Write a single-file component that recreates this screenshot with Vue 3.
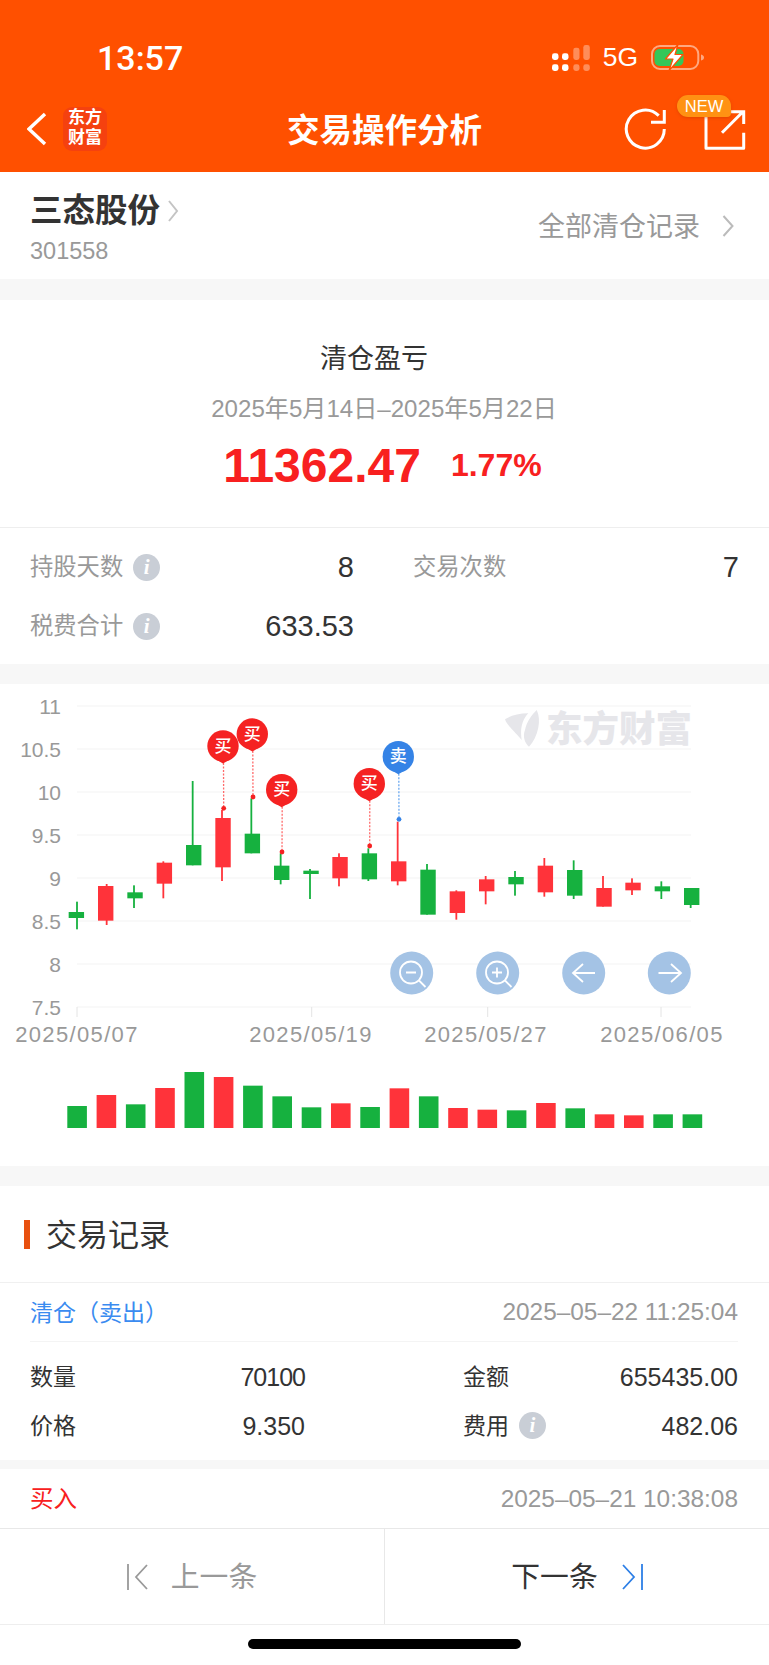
<template>
  <div class="page">
    <header class="top">
      <div class="status">
        <span class="time">13:57</span>
        <div class="status-right">
          <svg width="38" height="26" viewBox="0 0 38 26">
            <rect x="0" y="8.3" width="6.5" height="6.7" rx="2.4" fill="#fff" />
            <rect x="10" y="8.3" width="6.5" height="6.7" rx="2.4" fill="#fff" />
            <rect x="0" y="19.3" width="6.5" height="6.7" rx="2.4" fill="#fff" />
            <rect x="10" y="19.3" width="6.5" height="6.7" rx="2.4" fill="#fff" />
            <rect x="21.3" y="2.7" width="6.2" height="12.3" rx="2.4" fill="#fff" opacity=".35" />
            <rect x="31.3" y="0" width="6.5" height="15" rx="2.4" fill="#fff" opacity=".35" />
            <rect x="21.3" y="19.3" width="6.2" height="6.7" rx="2.4" fill="#fff" opacity=".35" />
            <rect x="31.3" y="19.3" width="6.5" height="6.7" rx="2.4" fill="#fff" opacity=".35" />
          </svg>
          <span class="net">5G</span>
          <svg width="53" height="27" viewBox="0 0 53 27">
            <rect x="1" y="2" width="46.3" height="23" rx="8" fill="none" stroke="#fff" stroke-opacity=".5" stroke-width="2" />
            <rect x="3.5" y="5" width="29" height="17" rx="5" fill="#34c759" />
            <path d="M50 10.5c2 .5 3 1.5 3 3s-1 2.500-3 3z" fill="#fff" fill-opacity=".5" />
            <path d="M27 .5 14.500 15H22l-4 11.700L32 10.500h-8z" fill="#fff" stroke="#ff5000" stroke-width="1.200" stroke-linejoin="round" />
          </svg>
        </div>
      </div>
      <div class="nav">
        <div class="nav-left">
          <svg width="20" height="34" viewBox="0 0 20 34">
            <path d="M18 2 2 17l16 15" fill="none" stroke="#fff" stroke-width="3.400" />
          </svg>
          <div class="logo">东方<br />财富</div>
        </div>
        <div class="nav-title">交易操作分析</div>
        <div class="nav-right">
          <svg width="44" height="44" viewBox="0 0 44 44">
            <path d="M41.300 22A19 19 0 1 1 35.700 8.600" fill="none" stroke="#fff" stroke-width="3" />
            <path d="M28 15.300h13.300V3" fill="none" stroke="#fff" stroke-width="3" />
          </svg>
          <div class="share">
            <svg width="42" height="41" viewBox="0 0 42 41">
              <path d="M2 8v31.300h37.700V23.700" fill="none" stroke="#fff" stroke-width="3" stroke-linejoin="round" />
              <path d="M18 23.700 38.700 3M27 2.700h12.700V15" fill="none" stroke="#fff" stroke-width="3" />
            </svg>
            <span class="new">NEW</span>
          </div>
        </div>
      </div>
    </header>

    <section class="stock">
      <div>
        <div class="stock-name">
          三态股份
          <svg width="11" height="22" viewBox="0 0 11 22">
            <path d="M1 1l8 10-8 10" fill="none" stroke="#c4c4c4" stroke-width="2" />
          </svg>
        </div>
        <div class="stock-code">301558</div>
      </div>
      <div class="all-link">
        <span class="cjk">全部清仓记录</span>
        <svg width="12" height="22" viewBox="0 0 12 22">
          <path d="M1.500 1l9 10-9 10" fill="none" stroke="#bbb" stroke-width="2" />
        </svg>
      </div>
    </section>

    <section class="summary">
      <div class="summary-head">
        <div class="summary-title">清仓盈亏</div>
        <div class="summary-date">2025年5月14日–2025年5月22日</div>
        <div class="summary-amount">
          <span class="profit">11362.47</span>
          <span class="percent">1.77%</span>
        </div>
      </div>
      <div class="stats">
        <div class="stat">
          <span class="stat-label"><span class="cjk">持股天数</span><i class="info">i</i></span>
          <span class="stat-value">8</span>
        </div>
        <div class="stat">
          <span class="stat-label"><span class="cjk">交易次数</span></span>
          <span class="stat-value">7</span>
        </div>
        <div class="stat">
          <span class="stat-label"><span class="cjk">税费合计</span><i class="info">i</i></span>
          <span class="stat-value">633.53</span>
        </div>
      </div>
    </section>

    <section class="chart">
      <svg width="769" height="482" viewBox="0 684 769 482">
        <!-- 水印 -->
        <path d="M536.700 710C541.700 720 538.300 736.700 529 746.700 525 743.300 522.300 736.700 525 730 526.700 721.700 531.700 715 536.700 710Z" fill="#e6e6ea" />
        <path d="M528.300 713.300C518.300 713.300 510 716 505 719.300 506.700 725 513.300 730 521.700 740 520 730 521.700 720 528.300 713.300Z" fill="#e6e6ea" />
        <text x="692" y="742" text-anchor="end" class="watermark">东方财富</text>

        <line v-for="g in grid" :key="g.label" x1="77" x2="691" :y1="g.y" :y2="g.y" stroke="#f3f3f3" stroke-width="1.200" />
        <text v-for="g in grid" :key="'l' + g.label" x="61" :y="g.y + 7.500" text-anchor="end" class="axis">{{ g.label }}</text>

        <g v-for="t in ticks" :key="t.label">
          <line :x1="t.x" :x2="t.x" y1="1007" y2="1017" stroke="#e4e4e4" stroke-width="1" />
          <text :x="t.tx" y="1042" text-anchor="middle" class="axis date">{{ t.label }}</text>
        </g>

        <g v-for="(c, i) in candles" :key="i" :fill="c.color">
          <rect :x="c.wick - 0.9" :y="c.top" width="1.800" :height="c.bottom - c.top" />
          <rect :x="c.x" :y="c.bodyTop" width="15.400" :height="c.bodyBottom - c.bodyTop" />
        </g>

        <g v-for="m in markers" :key="m.cx">
          <line :x1="m.cx + 0.5" :x2="m.dx" :y1="m.cy + 17" :y2="m.dy" :stroke="m.light" stroke-width="1.300" stroke-dasharray="2 1.500" />
          <circle :cx="m.dx" :cy="m.dy" r="2.400" :fill="m.color" />
          <circle :cx="m.cx" :cy="m.cy" r="15.700" :fill="m.color" />
          <path :d="`M${m.cx - 7} ${m.cy + 13.500}L${m.cx} ${m.cy + 17.500}L${m.cx + 7} ${m.cy + 13.500}Z`" :fill="m.color" />
          <text :x="m.cx" :y="m.cy + 5.500" text-anchor="middle" class="pin">{{ m.text }}</text>
        </g>

        <g class="tool" fill="none" stroke="#fff" stroke-width="1.800">
          <circle cx="411.700" cy="973" r="21.500" fill="#a4c3e5" stroke="none" />
          <circle cx="411" cy="972.500" r="11" />
          <path d="M406 972.500h10M419 980.500l6.500 6.500" />
          <circle cx="497.700" cy="973" r="21.500" fill="#a4c3e5" stroke="none" />
          <circle cx="497" cy="972.500" r="11" />
          <path d="M492 972.500h10M497 967.500v10M505 980.500l6.500 6.500" />
          <circle cx="583.700" cy="973" r="21.500" fill="#a4c3e5" stroke="none" />
          <path d="M573 973h22M583 964l-10 9 10 9" />
          <circle cx="669.300" cy="973" r="21.500" fill="#a4c3e5" stroke="none" />
          <path d="M658.500 973H681M671 964l10 9-10 9" />
        </g>

        <rect v-for="v in volumes" :key="v.x" :x="v.x" :y="v.y" width="19.600" :height="1128 - v.y" :fill="v.color" />
      </svg>
    </section>

    <section class="records-head">
      <i class="bar"></i>
      <h2>交易记录</h2>
    </section>

    <section class="record">
      <div class="record-top">
        <span class="sell cjk">清仓（卖出）</span>
        <span class="when">2025–05–22 11:25:04</span>
      </div>
      <div class="record-grid">
        <div class="cell">
          <span><em class="cjk">数量</em></span>
          <b class="tight">70100</b>
        </div>
        <div class="cell">
          <span><em class="cjk">金额</em></span>
          <b>655435.00</b>
        </div>
        <div class="cell">
          <span><em class="cjk">价格</em></span>
          <b>9.350</b>
        </div>
        <div class="cell">
          <span><em class="cjk">费用</em><i class="info">i</i></span>
          <b>482.06</b>
        </div>
      </div>
    </section>

    <section class="record-next">
      <span class="buy cjk">买入</span>
      <span class="when">2025–05–21 10:38:08</span>
    </section>

    <footer class="pager">
      <div class="pager-btn prev">
        <svg width="21" height="28" viewBox="0 0 21 28">
          <path d="M1 1v26M20 2 9 14l11 12" fill="none" stroke="#999" stroke-width="1.800" />
        </svg>
        <span class="cjk">上一条</span>
      </div>
      <div class="pager-btn next">
        <span class="cjk">下一条</span>
        <svg width="21" height="28" viewBox="0 0 21 28">
          <path d="M20 1v26M1 2l11 12L1 26" fill="none" stroke="#2d7fe6" stroke-width="1.800" />
        </svg>
      </div>
    </footer>
    <div class="home"><i></i></div>
  </div>
</template>

<script setup>
const RED = '#ff333a'
const GREEN = '#16b13f'

const grid = ['11', '10.5', '10', '9.5', '9', '8.5', '8', '7.5'].map((label, i) => ({
  label,
  y: 706 + i * 43
}))

const ticks = [
  { x: 77, tx: 77, label: '2025/05/07' },
  { x: 311.7, tx: 311, label: '2025/05/19' },
  { x: 487.7, tx: 486, label: '2025/05/27' },
  { x: 661, tx: 662, label: '2025/06/05' }
]

// 左缘, 影线x, 影线上, 影线下, 实体上, 实体下 (3倍坐标, 相对 y=680)
const raw = [
  [206, 231, 665, 748, 696, 714, 0],
  [294, 320, 612, 735, 618, 722, 1],
  [382, 402, 616, 684, 637, 655, 0],
  [470, 490, 544, 655, 548, 611, 1],
  [558, 578, 303, 556, 495, 556, 0],
  [646, 666, 390, 603, 414, 562, 1],
  [734, 754, 355, 520, 461, 520, 0],
  [822, 842, 520, 613, 557, 600, 0],
  [910, 930, 567, 657, 572, 582, 0],
  [997, 1017, 520, 619, 531, 595, 1],
  [1085, 1105, 505, 603, 520, 598, 0],
  [1173, 1193, 425, 616, 544, 604, 1],
  [1261, 1281, 552, 704, 569, 704, 0],
  [1349, 1369, 631, 719, 634, 699, 1],
  [1437, 1457, 588, 673, 598, 634, 1],
  [1525, 1545, 573, 647, 591, 613, 0],
  [1613, 1633, 534, 650, 557, 637, 1],
  [1701, 1721, 541, 657, 570, 647, 0],
  [1789, 1809, 588, 680, 624, 680, 1],
  [1876, 1896, 595, 645, 608, 631, 1],
  [1964, 1984, 604, 657, 619, 634, 0],
  [2052, 2072, 624, 684, 624, 675, 0]
]

const candles = raw.map(([x, wick, top, bottom, bodyTop, bodyBottom, up]) => ({
  x: x / 3,
  wick: wick / 3,
  top: 680 + top / 3,
  bottom: 680 + bottom / 3,
  bodyTop: 680 + bodyTop / 3,
  bodyBottom: 680 + bodyBottom / 3,
  color: up ? RED : GREEN
}))

const pin = (cx, cy, dx, dy, text) => {
  const sell = text === '卖'
  return {
    cx,
    cy,
    dx,
    dy,
    text,
    color: sell ? '#3583e6' : '#f52222',
    light: sell ? '#6aa8f0' : '#ff6a6a'
  }
}

const markers = [
  pin(223, 746, 223.7, 808.3, '买'),
  pin(252.3, 734, 253, 797, '买'),
  pin(281.7, 789.7, 282, 852, '买'),
  pin(369.3, 783.7, 369.7, 846, '买'),
  pin(398.3, 756.7, 399, 819.3, '卖')
]

const volTops = [198, 165, 193, 144, 96, 111, 137, 169, 202, 190, 201, 145, 169, 204, 209, 211, 189, 205, 223, 226, 223, 223]
const volUp = [0, 1, 0, 1, 0, 1, 0, 0, 0, 1, 0, 1, 0, 1, 1, 0, 1, 0, 1, 1, 0, 0]
const volumes = volTops.map((t, i) => ({
  x: 67.3 + i * 29.3,
  y: 1040 + t / 3,
  color: volUp[i] ? RED : GREEN
}))
</script>

<style>
html, body {
  margin: 0;
  background: #fff;
}
</style>

<style scoped>
.page {
  width: 769px;
  min-height: 1665px;
  background: #f7f7f7;
  font-family: "Liberation Sans", "Noto Sans CJK SC", sans-serif;
  color: #333;
  display: flex;
  flex-direction: column;
}
/* Noto 的汉字比原图偏下一点 */
.cjk {
  display: block;
  font-style: normal;
  margin-bottom: 4px;
}

.top {
  background: #ff5000;
  height: 172px;
  color: #fff;
}
.status {
  height: 90px;
  padding: 25px 65px 0 97px;
  box-sizing: border-box;
  display: flex;
  align-items: center;
  justify-content: space-between;
}
.time {
  font-family: Roboto, "Liberation Sans", sans-serif;
  font-size: 34px;
  font-weight: 500;
}
.status-right {
  display: flex;
  align-items: center;
  gap: 13px;
}
.net {
  font-size: 26.500px;
}
.nav {
  height: 82px;
  padding: 0 23px 4px 27px;
  box-sizing: border-box;
  display: grid;
  grid-template-columns: 1fr auto 1fr;
  align-items: center;
}
.nav-left {
  display: flex;
  align-items: center;
  gap: 16px;
}
.logo {
  width: 44px;
  height: 44px;
  border-radius: 9px;
  background: #f5410f;
  font-size: 17px;
  line-height: 20px;
  font-weight: 700;
  text-align: center;
  padding-top: 1px;
  box-sizing: border-box;
}
.nav-title {
  font-size: 32.500px;
  font-weight: 700;
  margin: 0 4px 4px 0;
}
.nav-right {
  display: flex;
  justify-content: flex-end;
  align-items: center;
  gap: 37px;
}
.share {
  position: relative;
  width: 42px;
  height: 41px;
  margin-top: 1px;
}
.new {
  position: absolute;
  left: -27px;
  top: -14px;
  width: 54px;
  height: 22px;
  line-height: 22px;
  text-align: center;
  font-size: 16.500px;
  background: #ff9213;
  border-radius: 11px 11px 4px 11px;
  box-shadow: 0 1px 3px rgba(200, 60, 0, .5);
}

.stock {
  background: #fff;
  height: 107px;
  margin-bottom: 21px;
  padding: 14px 35px 0 30px;
  box-sizing: border-box;
  display: flex;
  justify-content: space-between;
}
.stock-name {
  font-size: 32.500px;
  font-weight: 700;
  line-height: 48px;
  height: 50px;
  display: flex;
  align-items: center;
  gap: 8px;
}
.stock-code {
  font-size: 23.500px;
  color: #999;
  line-height: 32px;
  margin-top: -1px;
}
.all-link {
  font-size: 27px;
  color: #999;
  display: flex;
  align-items: center;
  gap: 22px;
  height: 80px;
}

.summary {
  background: #fff;
  height: 364px;
  margin-bottom: 20px;
}
.summary-head {
  height: 228px;
  border-bottom: 1px solid #eee;
  box-sizing: border-box;
  text-align: center;
  padding-top: 38px;
}
.summary-title {
  font-size: 27px;
  line-height: 42px;
  padding-right: 21px;
}
.summary-date {
  font-size: 24.100px;
  line-height: 34px;
  color: #999;
  margin-top: 12px;
  padding-right: 1px;
}
.summary-amount {
  display: flex;
  justify-content: center;
  align-items: center;
  gap: 30px;
  height: 56px;
  margin-top: 11px;
  padding-right: 4px;
  color: #f82020;
  font-weight: 700;
}
.profit {
  font-size: 48px;
}
.percent {
  font-size: 32px;
}
.stats {
  display: grid;
  grid-template-columns: 324px 324px;
  column-gap: 61px;
  row-gap: 19px;
  padding: 19px 30px 0;
}
.stat {
  display: flex;
  justify-content: space-between;
  align-items: center;
  height: 40px;
}
.stat-label {
  font-size: 23.300px;
  color: #999;
  display: flex;
  align-items: center;
}
.stat-value {
  font-size: 29px;
}
.stat:nth-child(2) .stat-label {
  margin-left: -2px;
}
.info {
  width: 27px;
  height: 27px;
  border-radius: 50%;
  background: #c9ced6;
  color: #fff;
  font: italic 700 21px/27px "Liberation Serif", serif;
  text-align: center;
  margin-left: 10px;
  display: inline-block;
}

.chart {
  background: #fff;
  height: 482px;
  margin-bottom: 20px;
}
.chart svg {
  display: block;
}
.axis {
  font-size: 21px;
  fill: #999;
}
.date {
  font-size: 22px;
  letter-spacing: 1.350px;
}
.watermark {
  font-size: 36.500px;
  font-weight: 900;
  fill: #e6e6ea;
}
.pin {
  font-size: 17px;
  font-weight: 500;
  fill: #fff;
}

.records-head {
  background: #fff;
  height: 97px;
  border-bottom: 1px solid #f0f0f0;
  box-sizing: border-box;
  padding: 0 0 0 24px;
  display: flex;
  align-items: center;
  gap: 16px;
}
.bar {
  width: 6px;
  height: 29px;
  background: #e8500f;
}
.records-head h2 {
  margin: 0 0 4px;
  font-size: 31px;
  font-weight: 400;
}

.record {
  background: #fff;
  height: 177px;
  margin-bottom: 9px;
  padding: 0 31px 0 30px;
  box-sizing: border-box;
}
.record-top {
  height: 59px;
  border-bottom: 1px solid #f4f4f4;
  box-sizing: border-box;
  display: flex;
  justify-content: space-between;
  align-items: center;
}
.sell {
  font-size: 23px;
  color: #3a8bf0;
  margin-bottom: 2px;
}
.buy {
  font-size: 23.500px;
  color: #f82020;
}
.when {
  font-size: 24.400px;
  color: #999;
}
.record-grid {
  display: grid;
  grid-template-columns: 275px 275px;
  column-gap: 158px;
  row-gap: 10px;
  padding-top: 15px;
}
.cell {
  display: flex;
  justify-content: space-between;
  align-items: center;
  height: 39px;
  font-size: 23px;
}
.cell span {
  display: flex;
  align-items: center;
}
.cell b {
  font-size: 25px;
  font-weight: 400;
  margin-top: 2px;
}
.cell .tight {
  letter-spacing: -1px;
}

.record-next {
  background: #fff;
  height: 59px;
  padding: 0 31px 0 30px;
  box-sizing: border-box;
  display: flex;
  justify-content: space-between;
  align-items: center;
}

.pager {
  background: #fff;
  height: 97px;
  border-top: 1px solid #e8e8e8;
  border-bottom: 1px solid #eee;
  box-sizing: border-box;
  display: flex;
}
.pager-btn {
  flex: 1;
  display: flex;
  align-items: center;
  justify-content: center;
  font-size: 28.800px;
}
.prev {
  gap: 23px;
  color: #999;
  border-right: 1px solid #e8e8e8;
}
.next {
  gap: 24px;
  color: #333;
}

.home {
  background: #fff;
  flex: 1;
  padding-top: 14px;
  display: flex;
  justify-content: center;
  box-sizing: border-box;
}
.home i {
  width: 273px;
  height: 10px;
  border-radius: 5px;
  background: #000;
}
</style>
